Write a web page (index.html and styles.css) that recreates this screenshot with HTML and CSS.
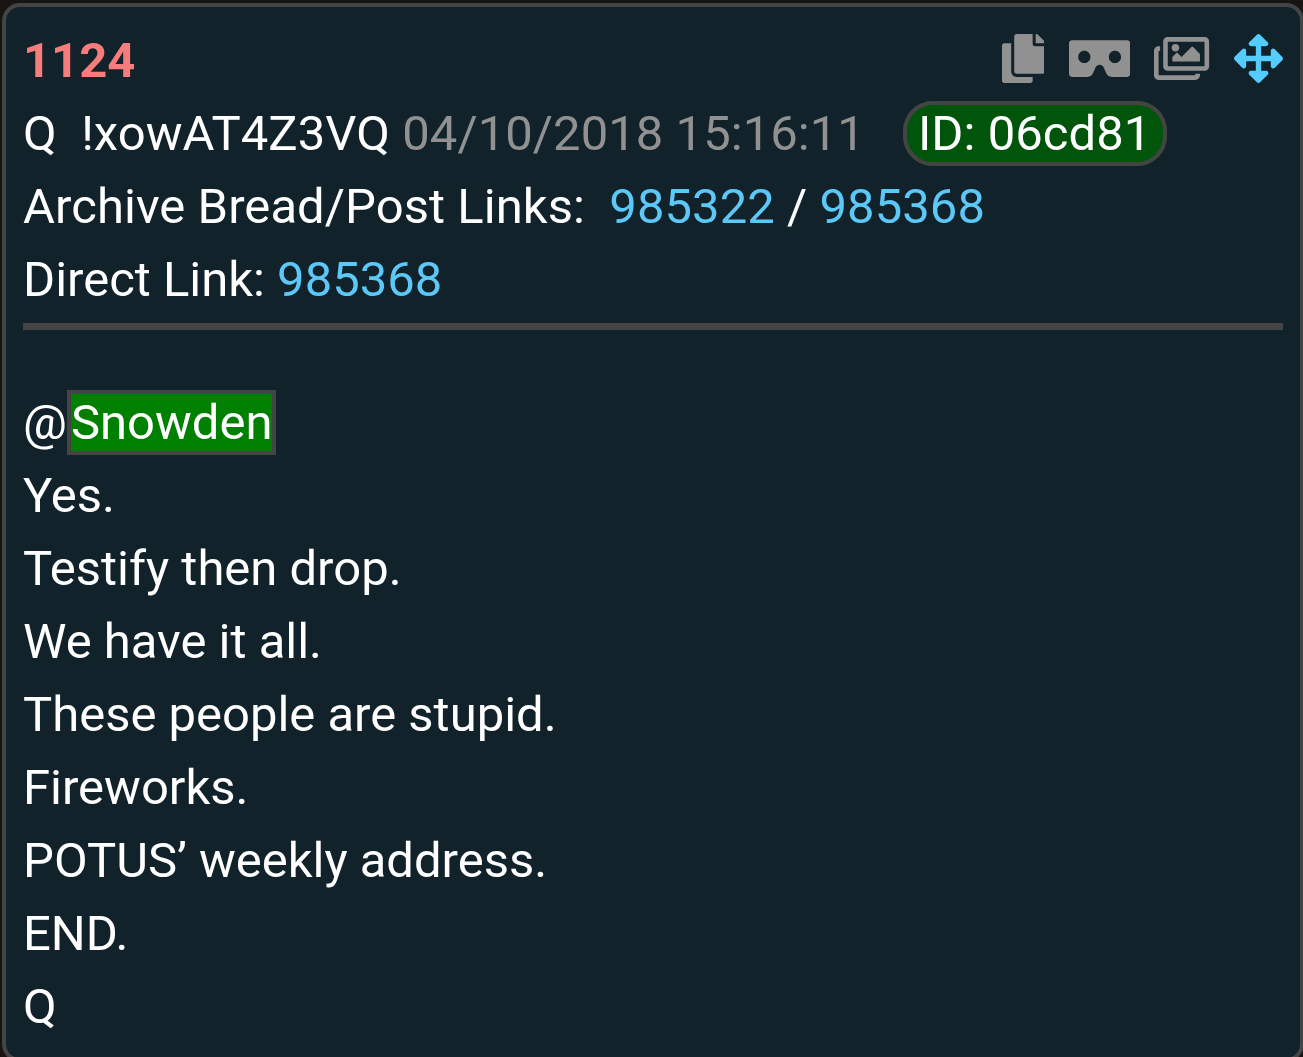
FILE: index.html
```html
<!DOCTYPE html>
<html lang="en">
<head>
  <meta charset="UTF-8">
  <meta name="viewport" content="width=device-width, initial-scale=1.0">
  <title>1124</title>
  <link rel="stylesheet" href="styles.css">
</head>
<body>
  <article class="post">
    <header class="post-header">
      <div class="title-row">
        <span class="number">1124</span>
        <div class="actions">
          <!-- copy -->
          <svg class="icon" viewBox="0 0 448 512"><path d="M320 448v40c0 13.255-10.745 24-24 24H24c-13.255 0-24-10.745-24-24V120c0-13.255 10.745-24 24-24h72v296c0 30.879 25.121 56 56 56h168zm0-344V0H152c-13.255 0-24 10.745-24 24v368c0 13.255 10.745 24 24 24h272c13.255 0 24-10.745 24-24V128H344c-13.2 0-24-10.8-24-24zm120.971-31.029L375.029 7.029A24 24 0 0 0 358.059 0H352v96h96v-6.059a24 24 0 0 0-7.029-16.97z"/></svg>
          <!-- viewer -->
          <svg class="icon" viewBox="0 0 640 512"><path d="M608 64H32C14.33 64 0 78.33 0 96v320c0 17.67 14.33 32 32 32h160.22c25.19 0 48.03-14.77 58.36-37.74l27.74-61.64C286.21 331.08 302.35 320 320 320s33.79 11.08 41.68 28.62l27.74 61.64C399.75 433.23 422.6 448 447.78 448H608c17.67 0 32-14.33 32-32V96c0-17.67-14.33-32-32-32zM160 304c-35.35 0-64-28.65-64-64s28.65-64 64-64 64 28.65 64 64-28.65 64-64 64zm320 0c-35.35 0-64-28.65-64-64s28.65-64 64-64 64 28.65 64 64-28.65 64-64 64z"/></svg>
          <!-- images -->
          <svg class="icon" viewBox="0 0 576 512"><path d="M480 416v16c0 26.51-21.49 48-48 48H48c-26.51 0-48-21.49-48-48V176c0-26.51 21.49-48 48-48h16v48H54a6 6 0 0 0-6 6v244a6 6 0 0 0 6 6h372a6 6 0 0 0 6-6v-10h48zm42-336H150a6 6 0 0 0-6 6v244a6 6 0 0 0 6 6h372a6 6 0 0 0 6-6V86a6 6 0 0 0-6-6zm6-48c26.51 0 48 21.49 48 48v256c0 26.51-21.49 48-48 48H144c-26.51 0-48-21.49-48-48V80c0-26.51 21.49-48 48-48h384zM264 144c0 22.091-17.909 40-40 40s-40-17.909-40-40 17.909-40 40-40 40 17.909 40 40zm-72 96l39.515-39.515c4.686-4.686 12.284-4.686 16.971 0L288 240l103.515-103.515c4.686-4.686 12.284-4.686 16.971 0L480 208v80H192v-48z"/></svg>
          <!-- move -->
          <svg class="icon icon-move" viewBox="0 0 512 512"><path d="M352.201 425.775l-79.196 79.196c-9.373 9.373-24.568 9.373-33.941 0l-79.196-79.196c-15.119-15.119-4.411-40.971 16.971-40.97h51.162L228 284H127.196v51.162c0 21.382-25.851 32.09-40.971 16.971L7.029 272.937c-9.373-9.373-9.373-24.569 0-33.941L86.225 159.8c15.119-15.119 40.971-4.411 40.971 16.971V228H228V127.196h-51.23c-21.382 0-32.09-25.851-16.971-40.971l79.196-79.196c9.373-9.373 24.568-9.373 33.941 0l79.196 79.196c15.119 15.119 4.411 40.971-16.971 40.971h-51.162V228h100.804v-51.162c0-21.382 25.851-32.09 40.97-16.971l79.196 79.196c9.373 9.373 9.373 24.569 0 33.941L425.773 352.2c-15.119 15.119-40.971 4.411-40.97-16.971V284H284v100.804h51.23c21.382 0 32.09 25.851 16.971 40.971z"/></svg>
        </div>
      </div>
      <div class="meta">Q&nbsp; !xowAT4Z3VQ <span class="date">04/10/2018 15:16:11</span><span class="user-id">ID: 06cd81</span></div>
      <div class="meta">Archive Bread/Post Links:&nbsp; <a href="#">985322</a> / <a href="#">985368</a></div>
      <div>Direct Link: <a href="#">985368</a></div>
    </header>
    <div class="post-body">
      <div>@<span class="highlight">Snowden</span></div>
      <div>Yes.</div>
      <div>Testify then drop.</div>
      <div>We have it all.</div>
      <div>These people are stupid.</div>
      <div>Fireworks.</div>
      <div>POTUS’ weekly address.</div>
      <div>END.</div>
      <div>Q</div>
    </div>
  </article>
</body>
</html>
```
FILE: styles.css
```css
body {
  margin: 0;
  height: 1057px;
  overflow: hidden;
  background: #171514;
  color: #fff;
  font-family: Roboto, sans-serif;
  font-size: 48.97px;
  line-height: 73px;
}
.post {
  box-sizing: border-box;
  width: 1302px;
  height: 1059px;
  margin: 3px 0 0 2px;
  padding: 17px 17px 0;
  border: 4px solid #444;
  border-radius: 18px;
  background: #12222a;
  white-space: nowrap;
}
.post-header {
  height: 299px;
  border-bottom: 7px solid #444;
}
.title-row {
  display: flex;
  justify-content: space-between;
}
.number {
  color: #f77c7c;
  font-weight: bold;
}
.actions {
  display: flex;
  gap: 24.4px;
  padding-top: 10px;
}
.icon {
  height: 49px;
  fill: #919191;
}
.icon-move {
  fill: #55ccff;
}
.meta {
  letter-spacing: 0.06px;
}
.date {
  color: #919191;
}
.user-id {
  margin-left: 38px;
  padding: 0 12px 0 11px;
  border: 4px solid #444;
  border-radius: 30px;
  background: #00550b;
}
a {
  color: #5bc8f8;
  text-decoration: none;
}
.post-body {
  padding-top: 56px;
}
.highlight {
  border: 4px solid #444;
  background: #008000;
}
```
